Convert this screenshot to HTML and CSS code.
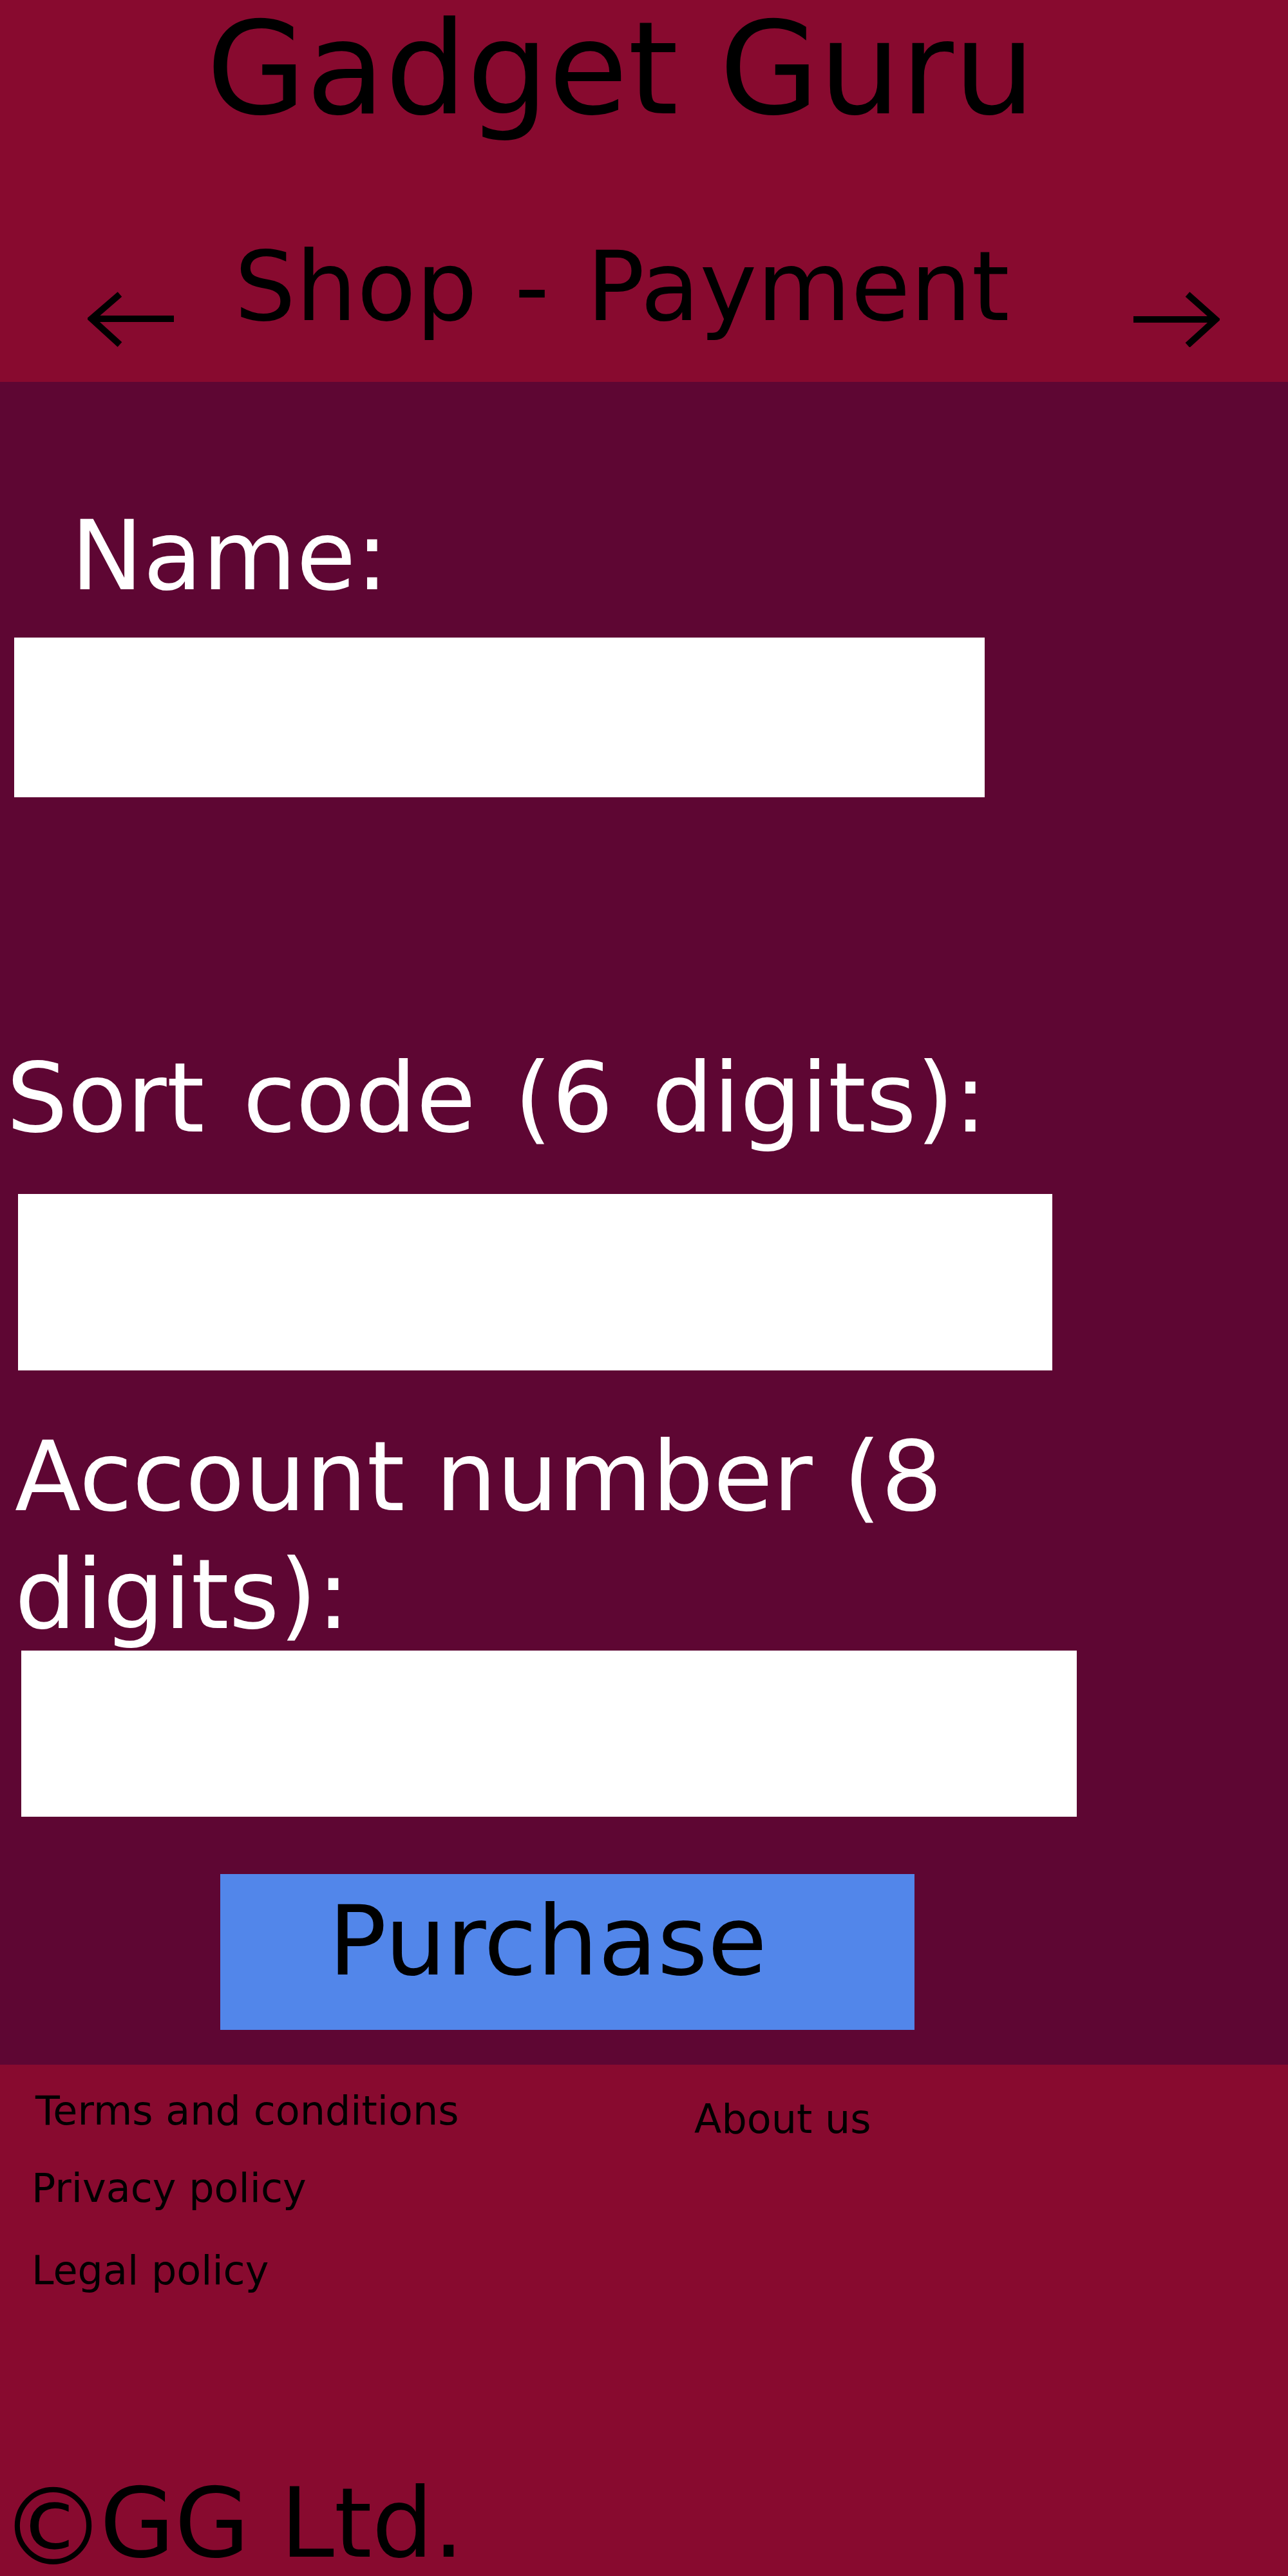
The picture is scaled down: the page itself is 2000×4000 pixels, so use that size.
FILE: index.html
```html
<!DOCTYPE html>
<html lang="en">
<head>
<meta charset="utf-8">
<title>Gadget Guru - Shop - Payment</title>
<link rel="stylesheet" href="styles.css">
</head>
<body>
<header class="site-header">
  <h1 class="brand">Gadget Guru</h1>
  <nav class="page-nav">
    <a class="nav-arrow nav-back" href="#" aria-label="Back">
      <svg width="134" height="86" viewBox="0 0 134 86"><path d="M134 42 H6 M50 4 L6 42 L50 82" fill="none" stroke="#000" stroke-width="10"/></svg>
    </a>
    <h2 class="page-title">Shop - Payment</h2>
    <a class="nav-arrow nav-next" href="#" aria-label="Next">
      <svg width="134" height="86" viewBox="0 0 134 86"><path d="M0 43 H128 M84 4 L128 43 L84 83" fill="none" stroke="#000" stroke-width="10"/></svg>
    </a>
  </nav>
</header>
<main class="payment">
  <label class="field-label label-name" for="name">Name:</label>
  <input class="field input-name" id="name" type="text">
  <label class="field-label label-sort" for="sort">Sort code (6 digits):</label>
  <input class="field input-sort" id="sort" type="text">
  <label class="field-label label-account" for="account">Account number (8 digits):</label>
  <input class="field input-account" id="account" type="text">
  <button class="purchase" type="button">Purchase</button>
</main>
<footer class="site-footer">
  <div class="footer-links">
    <div class="footer-col">
      <a class="footer-link link-terms" href="#">Terms and conditions</a>
      <a class="footer-link" href="#">Privacy policy</a>
      <a class="footer-link link-legal" href="#">Legal policy</a>
    </div>
    <div class="footer-col-right">
      <a class="footer-link link-about" href="#">About us</a>
    </div>
  </div>
  <p class="copyright"><span class="copyright-mark">©</span>GG Ltd.</p>
</footer>
</body>
</html>
```

FILE: styles.css
```css
html, body {
  margin: 0;
  padding: 0;
}

body {
  font-family: "DejaVu Sans", "Noto Sans", sans-serif;
  display: flex;
  flex-direction: column;
  min-height: 4000px;
  background: #880a2f;
}

a {
  color: #000;
  text-decoration: none;
}

/* Header */
.site-header {
  height: 593px;
  background: #880a2f;
  display: flex;
  flex-direction: column;
  box-sizing: border-box;
}

.brand {
  margin: 0;
  padding: 7px 72px 0 0;
  font-size: 200px;
  line-height: 200px;
  font-weight: normal;
  text-align: center;
  color: #000;
}

.page-nav {
  display: flex;
  align-items: flex-start;
  margin-top: 151px;
  padding: 0 106px 0 136px;
}

.nav-arrow {
  display: block;
  margin-top: 95px;
  line-height: 0;
}

.nav-next {
  margin-left: auto;
}

.page-title {
  margin: 0 0 0 94px;
  font-size: 150px;
  line-height: 175px;
  font-weight: normal;
  word-spacing: 10px;
  color: #000;
}

/* Main form */
.payment {
  background: #5e0633;
  display: flex;
  flex-direction: column;
  align-items: flex-start;
  padding: 0 0 54px 0;
}

.field-label {
  display: block;
  color: #fff;
  font-size: 150px;
  line-height: 183px;
}

.label-name {
  margin: 179px 0 0 110px;
}

.label-sort {
  margin: 376px 0 0 10px;
  word-spacing: 12px;
}

.label-account {
  margin: 74px 0 0 23px;
  max-width: 1700px;
}

.field {
  display: block;
  background: #fff;
  border: 0;
  padding: 0;
  margin: 0;
  box-sizing: border-box;
  font-family: inherit;
  outline: none;
}

.input-name {
  margin: 35px 0 0 22px;
  width: 1507px;
  height: 248px;
}

.input-sort {
  margin: 57px 0 0 28px;
  width: 1606px;
  height: 274px;
}

.input-account {
  margin: -5px 0 0 33px;
  width: 1639px;
  height: 258px;
}

.purchase {
  display: flex;
  align-items: flex-start;
  margin: 89px 0 0 342px;
  width: 1078px;
  height: 242px;
  box-sizing: border-box;
  padding: 17px 0 0 168px;
  border: 0;
  background: #5286ea;
  color: #000;
  font-family: inherit;
  font-size: 150px;
  line-height: 175px;
  text-align: left;
}

/* Footer */
.site-footer {
  flex: 1;
  background: #880a2f;
  display: flex;
  flex-direction: column;
  padding-top: 36px;
}

.footer-links {
  display: flex;
  align-items: flex-start;
}

.footer-col {
  width: 1078px;
  box-sizing: border-box;
  padding-left: 49px;
  display: flex;
  flex-direction: column;
  gap: 48px;
}

.footer-link {
  font-size: 62px;
  line-height: 72px;
}

.link-terms {
  margin-left: 6px;
}

.link-legal {
  margin-top: 8px;
}

.link-about {
  display: block;
  margin-top: 13px;
}

.copyright {
  margin: auto 0 7px 0;
  padding-left: 0;
  font-size: 150px;
  line-height: 150px;
  color: #000;
}

.copyright-mark {
  font-size: 165px;
  line-height: 0;
  vertical-align: -12px;
  margin-right: -10px;
}
```
